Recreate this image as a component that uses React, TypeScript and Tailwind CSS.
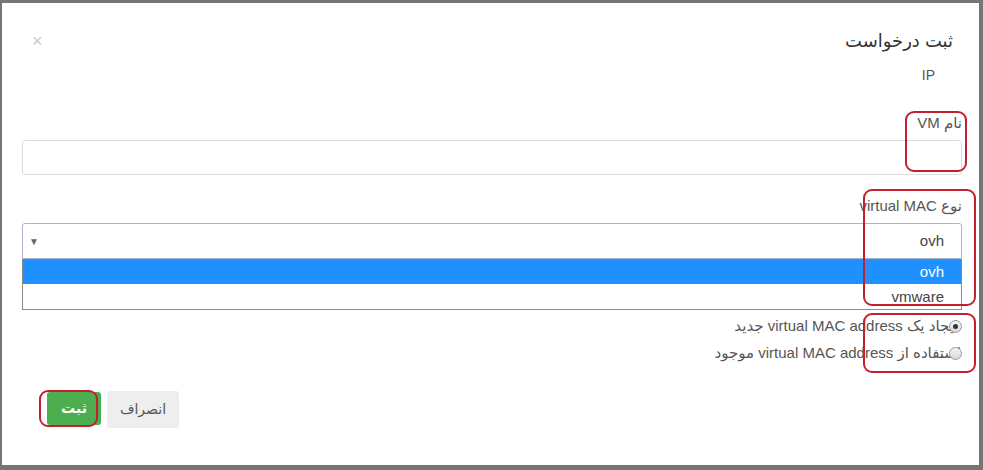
import React from 'react'

// Red rounded outlines drawn over the form (annotation marks)
const marks = [
    'left-[905px] top-[111px] w-[62px] h-[61px]',
    'left-[863px] top-[189px] w-[113px] h-[117px]',
    'left-[863px] top-[313px] w-[113px] h-[60px]',
    'left-[39px] top-[390px] w-[59px] h-[37px]',
]

const Radio = ({ checked }: { checked: boolean }) => (
    <span className="relative z-10 inline-flex h-[13px] w-[13px] shrink-0 items-center justify-center rounded-full border border-[#9a9a9a] bg-gradient-to-b from-[#f4f4f4] to-[#d8d8d8]">
        {checked && <span className="h-[5px] w-[5px] rounded-full bg-[#333]" />}
    </span>
)

export default function App() {
    return (
        <div className="relative h-[470px] w-[983px] overflow-hidden bg-[#767676] pt-[3px] pl-[2px] font-['Liberation_Sans','DejaVu_Sans',sans-serif]">
            <div dir="rtl" className="h-[462px] w-[977px] bg-white pr-[17px] pl-[20px]">
                {/* Header */}
                <div className="flex items-center justify-between pt-[25px] pr-[9px] pl-[10px]">
                    <h4 className="text-[18px] leading-[26px] text-[#333]">ثبت درخواست</h4>
                    <span className="text-[18px] leading-[22px] text-[#c8c8c8]">×</span>
                </div>

                {/* Body */}
                <div className="pt-[11px] text-[15px] text-[#555]">
                    <div className="pr-[27px] text-[14px] leading-[20px]">IP</div>

                    <div className="mt-[28px] leading-[20px]">نام VM</div>
                    <div className="mt-[7px] h-[35px] rounded-[3px] border border-[#dcdcdc]" />

                    <div className="mt-[21px] leading-[20px]">نوع virtual MAC</div>
                    <div className="mt-[7px]">
                        <div className="flex h-[36px] items-center justify-between rounded-t-[3px] border border-[#a9b4c8] pr-[17px] pl-[6px] text-[15px] text-[#444]">
                            <span>ovh</span>
                            <span className="text-[10px] text-[#666]">▼</span>
                        </div>
                        <div className="border border-t-0 border-[#8a8a8a] text-[15px]">
                            <div className="h-[25px] bg-[#1e90ff] pr-[17px] leading-[25px] text-white">ovh</div>
                            <div className="h-[25px] pr-[17px] leading-[25px] text-[#444]">vmware</div>
                        </div>
                    </div>

                    <div className="mt-[6px] flex items-center leading-[20px] text-[#555]">
                        <Radio checked />
                        <span className="-mr-[9px]">ایجاد یک virtual MAC address جدید</span>
                    </div>
                    <div className="mt-[7px] flex items-center leading-[20px] text-[#555]">
                        <Radio checked={false} />
                        <span className="-mr-[12px]">استفاده از virtual MAC address موجود</span>
                    </div>
                </div>

                {/* Footer */}
                <div className="mt-[28px] flex justify-end gap-[6px] pl-[25px]">
                    <button className="h-[37px] w-[72px] rounded-[3px] bg-[#eeeeee] text-[14px] text-[#555]">انصراف</button>
                    <button className="mt-[1px] h-[33px] w-[54px] rounded-[3px] bg-[#4cae4f] text-[14px] font-bold text-white">ثبت</button>
                </div>
            </div>

            {marks.map((m, i) => (
                <div key={i} className={`pointer-events-none absolute rounded-[9px] border-2 border-[#c3202e] ${m}`} />
            ))}
        </div>
    )
}
